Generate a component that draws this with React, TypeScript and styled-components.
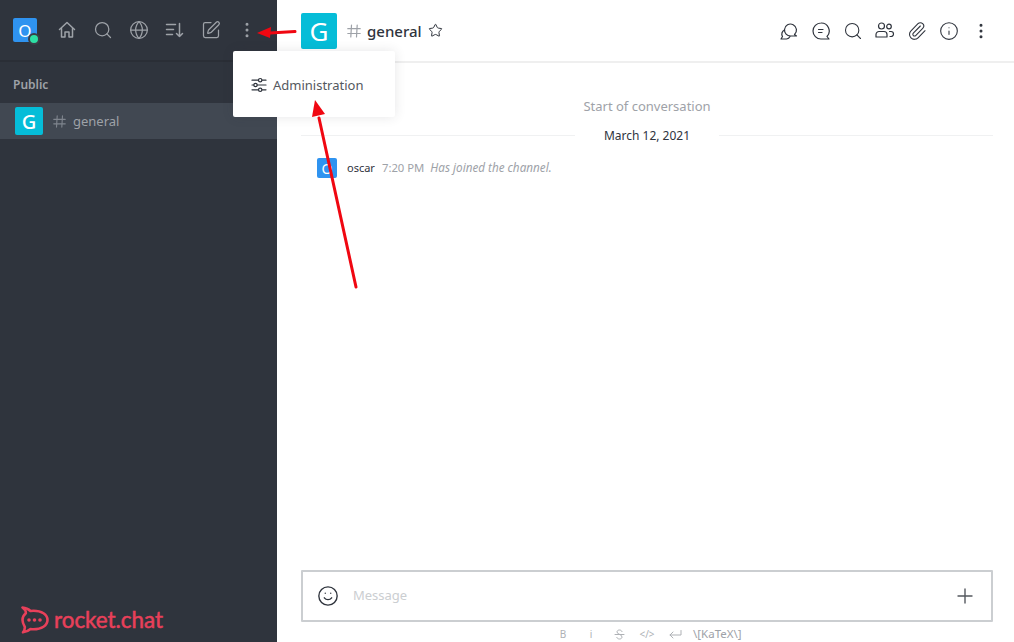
import styled, { createGlobalStyle } from "styled-components";
import { Search, Globe, SquarePen, MoreVertical, Star, Smile, Plus, Paperclip, Info } from "lucide-react";

function HomeIcon() {
  return (
    <svg width="20" height="20" viewBox="0 0 20 20" fill="none" stroke="currentColor" strokeWidth="1.5" strokeLinecap="round" strokeLinejoin="round">
      <path d="M2.500 9.500L10 2.500l7.500 7" />
      <path d="M4.500 8.500v8.500h3.500v-5h4v5h3.500V8.500" />
    </svg>
  );
}

function SortIcon() {
  return (
    <svg width="20" height="20" viewBox="0 0 20 20" fill="none" stroke="currentColor" strokeWidth="1.5" strokeLinecap="round" strokeLinejoin="round">
      <path d="M1.500 4.500h9M1.500 9.500h7M1.500 14.500h6" />
      <path d="M14.500 3.500v13M11.500 13.500l3 3 3-3" />
    </svg>
  );
}

function HashIcon({ size, color }: { size: number; color: string }) {
  return (
    <svg width={size} height={size} viewBox="0 0 14 14" fill="none" stroke={color} strokeWidth="1.200" strokeLinecap="round">
      <path d="M4.500 1L3.800 13M10.200 1l-.7 12M.8 4.700h12.400M.8 9.500h12.400" />
    </svg>
  );
}

function SlidersIcon() {
  return (
    <svg width="16" height="16" viewBox="0 0 16 16" fill="none" stroke="#2f343d" strokeWidth="1.200" strokeLinecap="round">
      <path d="M1 3.200h6.500M11 3.200h4M1 8h1.800M6.300 8H15M1 12.800h6.500M11 12.800h4" />
      <circle cx="9.200" cy="3.200" r="1.700" />
      <circle cx="4.500" cy="8" r="1.700" />
      <circle cx="9.200" cy="12.800" r="1.700" />
    </svg>
  );
}

function ThreadsIcon() {
  return (
    <svg width="20" height="20" viewBox="0 0 20 20" fill="none" stroke="currentColor" strokeWidth="1.200" strokeLinecap="round" strokeLinejoin="round">
      <path d="M5.500 8.500a6 6 0 1 1 10 5l2 1.500h-6a6 6 0 0 1-6-6.500z" />
      <path d="M5.500 9a4.500 4.500 0 0 0-2 6.500L2 18h5.500a4.500 4.500 0 0 0 3.500-2.500" />
    </svg>
  );
}

function DiscussionIcon() {
  return (
    <svg width="20" height="20" viewBox="0 0 20 20" fill="none" stroke="currentColor" strokeWidth="1.200" strokeLinecap="round" strokeLinejoin="round">
      <path d="M10 2a8 8 0 1 0 0 16h8l-2-2.500A8 8 0 0 0 10 2z" />
      <path d="M7.500 8.500h4.500M7.500 11.500h3.500" />
    </svg>
  );
}

function MembersIcon() {
  return (
    <svg width="20" height="20" viewBox="0 0 20 20" fill="none" stroke="currentColor" strokeWidth="1.200" strokeLinecap="round" strokeLinejoin="round">
      <circle cx="6.500" cy="5" r="3" />
      <circle cx="14" cy="5.500" r="2.300" />
      <path d="M1 16v-2.500a3 3 0 0 1 3-3h5a3 3 0 0 1 3 3V16z" />
      <path d="M14.500 10.500h1.500a2.500 2.500 0 0 1 0 5h-1" />
    </svg>
  );
}

function StrikeIcon() {
  return (
    <svg width="11" height="11" viewBox="0 0 11 11" fill="none" stroke="currentColor" strokeWidth="1" strokeLinecap="round">
      <path d="M8 2.500C7.500 1.500 6.500 1 5.500 1 4 1 3 1.800 3 3c0 2.500 5 2 5 5 0 1.200-1 2-2.500 2-1.200 0-2.200-.5-2.700-1.500M1 5.500h9" />
    </svg>
  );
}

function ReturnIcon() {
  return (
    <svg width="13" height="11" viewBox="0 0 13 11" fill="none" stroke="currentColor" strokeWidth="1" strokeLinecap="round" strokeLinejoin="round">
      <path d="M12 1.500v4.500H1M4 3L1 6l3 3" />
    </svg>
  );
}

function RocketLogoIcon() {
  return (
    <svg width="30" height="28" viewBox="0 0 30 28" fill="none">
      <path
        d="M1.500 1.500c3 .2 6 1.500 8 3.500 1-.2 2-.3 3-.3 8 0 14 3.800 14 9.300s-6 9.300-14 9.300c-1 0-2-.1-3-.3-2 1.800-4.500 3-7.500 3.300 1.500-1.800 2-3.500 1.800-5.500C2.800 19 1.500 16.800 1.500 14c0-2.700 1.300-5 3.300-6.700.2-2-.8-4-3.300-5.800z"
        stroke="#e8405a"
        strokeWidth="2.600"
        strokeLinejoin="round"
      />
      <circle cx="8" cy="14" r="1.800" fill="#e8405a" />
      <circle cx="13.500" cy="14" r="1.800" fill="#e8405a" />
      <circle cx="19" cy="14" r="1.800" fill="#e8405a" />
    </svg>
  );
}

export default function App() {
  return (
    <Page>
      <GlobalStyle />
      <Sidebar>
        <SidebarHeader>
          <UserAvatar>
            O
            <StatusDot />
          </UserAvatar>
          <SidebarIcons>
            <SidebarButton><HomeIcon /></SidebarButton>
            <SidebarButton><Search size={20} strokeWidth={1.5} /></SidebarButton>
            <SidebarButton><Globe size={20} strokeWidth={1.5} /></SidebarButton>
            <SidebarButton><SortIcon /></SidebarButton>
            <SidebarButton><SquarePen size={20} strokeWidth={1.5} /></SidebarButton>
            <SidebarButton><MoreVertical size={20} strokeWidth={1.6} /></SidebarButton>
          </SidebarIcons>
        </SidebarHeader>
        <SectionTitle>Public</SectionTitle>
        <RoomRow>
          <RoomAvatar>G</RoomAvatar>
          <HashIcon size={13} color="#7f858e" />
          <RoomName>general</RoomName>
        </RoomRow>
        <LogoRow>
          <RocketLogoIcon />
          <LogoText>rocket.chat</LogoText>
        </LogoRow>
      </Sidebar>

      <Main>
        <MainHeader>
          <HeaderAvatar>G</HeaderAvatar>
          <HashIcon size={14} color="#9ea2a8" />
          <ChannelName>general</ChannelName>
          <Star size={15} strokeWidth={1.6} color="#2f343d" />
          <HeaderTools>
            <ToolButton><ThreadsIcon /></ToolButton>
            <ToolButton><DiscussionIcon /></ToolButton>
            <ToolButton><Search size={20} strokeWidth={1.3} /></ToolButton>
            <ToolButton><MembersIcon /></ToolButton>
            <ToolButton><Paperclip size={20} strokeWidth={1.3} /></ToolButton>
            <ToolButton><Info size={20} strokeWidth={1.3} /></ToolButton>
            <ToolButton><MoreVertical size={20} strokeWidth={1.6} /></ToolButton>
          </HeaderTools>
        </MainHeader>

        <Messages>
          <StartNote>Start of conversation</StartNote>
          <DateDivider>
            <DateLabel>March 12, 2021</DateLabel>
          </DateDivider>
          <MessageRow>
            <MessageAvatar>O</MessageAvatar>
            <Author>oscar</Author>
            <Time>7:20 PM</Time>
            <SystemText>Has joined the channel.</SystemText>
          </MessageRow>
        </Messages>

        <Composer>
          <Smile size={22} strokeWidth={1.5} color="#2f343d" />
          <Placeholder>Message</Placeholder>
          <Plus size={24} strokeWidth={1.4} color="#54585e" />
        </Composer>
        <FormatBar>
          <FormatItem>B</FormatItem>
          <FormatItem>i</FormatItem>
          <FormatItem><StrikeIcon /></FormatItem>
          <FormatItem>&lt;/&gt;</FormatItem>
          <FormatItem><ReturnIcon /></FormatItem>
          <KatexLabel>\[KaTeX\]</KatexLabel>
        </FormatBar>
      </Main>

      <Menu>
        <SlidersIcon />
        <MenuLabel>Administration</MenuLabel>
      </Menu>

      <Annotations width="1014" height="642" viewBox="0 0 1014 642">
        <path d="M295 31.500 L270 33" stroke="#f00711" strokeWidth="3" strokeLinecap="round" />
        <path d="M257 33 L271 27 L270 38 Z" fill="#f00711" />
        <path d="M356 287 L319 118" stroke="#f00711" strokeWidth="3" strokeLinecap="round" />
        <path d="M315 100 L312 117 L325 114 Z" fill="#f00711" />
      </Annotations>
    </Page>
  );
}

const GlobalStyle = createGlobalStyle`
  html, body {
    margin: 0;
    padding: 0;
    background: #fff;
  }
  body {
    font-family: "Noto Sans", "Open Sans", sans-serif;
  }
`;

const Page = styled.div`
  position: relative;
  display: flex;
  width: 1014px;
  height: 642px;
  overflow: hidden;
`;

const Sidebar = styled.aside`
  display: flex;
  flex-direction: column;
  flex: 0 0 277px;
  background: #2f343d;
`;

const SidebarHeader = styled.div`
  display: flex;
  align-items: center;
  flex: 0 0 62px;
  box-sizing: border-box;
  padding: 0 0 0 13px;
  border-bottom: 2px solid #2a2e36;
`;

const UserAvatar = styled.div`
  position: relative;
  display: flex;
  align-items: center;
  justify-content: center;
  width: 24px;
  height: 24px;
  border-radius: 2px;
  background: #2f93f0;
  color: #fff;
  font-size: 17px;
`;

const StatusDot = styled.span`
  position: absolute;
  right: -3px;
  bottom: -3px;
  width: 8px;
  height: 8px;
  border-radius: 50%;
  background: #2de0a5;
  border: 2px solid #3a3f47;
`;

const SidebarIcons = styled.div`
  display: flex;
  margin-left: 12px;
`;

const SidebarButton = styled.div`
  display: flex;
  align-items: center;
  justify-content: center;
  width: 36px;
  height: 36px;
  color: #9ea2a8;
`;

const SectionTitle = styled.div`
  display: flex;
  align-items: center;
  box-sizing: border-box;
  height: 41px;
  padding: 3px 0 0 13px;
  color: #9ea2a8;
  font-size: 12px;
  font-weight: 600;
`;

const RoomRow = styled.div`
  display: flex;
  align-items: center;
  height: 36px;
  padding-left: 15px;
  background: #414852;
`;

const RoomAvatar = styled.div`
  display: flex;
  align-items: center;
  justify-content: center;
  width: 28px;
  height: 28px;
  margin-right: 10px;
  border-radius: 2px;
  background: #05bdd8;
  color: #fff;
  font-size: 20px;
  font-weight: 500;
`;

const RoomName = styled.span`
  margin-left: 7px;
  color: #9ea2a8;
  font-size: 13px;
`;

const LogoRow = styled.div`
  display: flex;
  align-items: center;
  gap: 3px;
  margin-top: auto;
  padding: 0 0 8px 21px;
`;

const LogoText = styled.span`
  color: #e8405a;
  font-family: Lato, sans-serif;
  font-size: 22.400px;
  font-weight: 400;
  line-height: 28px;
  -webkit-text-stroke: 0.5px #e8405a;
`;

const Main = styled.main`
  display: flex;
  flex-direction: column;
  flex: 1;
  min-width: 0;
`;

const MainHeader = styled.header`
  display: flex;
  align-items: center;
  flex: 0 0 63px;
  box-sizing: border-box;
  padding: 0 17px 0 24px;
  border-bottom: 2px solid #efefef;
`;

const HeaderAvatar = styled.div`
  display: flex;
  align-items: center;
  justify-content: center;
  width: 36px;
  height: 36px;
  margin-right: 10px;
  border-radius: 2px;
  background: #05bdd8;
  color: #fff;
  font-size: 26px;
`;

const ChannelName = styled.span`
  margin: 0 6px 0 6px;
  color: #2f343d;
  font-size: 15px;
  font-weight: 500;
`;

const HeaderTools = styled.div`
  display: flex;
  margin-left: auto;
`;

const ToolButton = styled.div`
  display: flex;
  align-items: center;
  justify-content: center;
  width: 32px;
  height: 32px;
  color: #2f343d;
`;

const Messages = styled.section`
  flex: 1;
  padding: 33px 21px 0 24px;
`;

const StartNote = styled.div`
  color: #9ea2a8;
  font-size: 13px;
  line-height: 20px;
  text-align: center;
`;

const DateDivider = styled.div`
  display: flex;
  justify-content: center;
  margin-top: 9px;
  border-bottom: 1px solid #f0f1f2;
  height: 10px;
`;

const DateLabel = styled.span`
  align-self: flex-start;
  margin-top: 1px;
  padding: 0 29px;
  background: #fff;
  color: #2f343d;
  font-size: 12px;
  line-height: 19px;
`;

const MessageRow = styled.div`
  display: flex;
  align-items: center;
  height: 20px;
  margin-top: 22px;
  padding-left: 16px;
  font-size: 12px;
`;

const MessageAvatar = styled.div`
  display: flex;
  align-items: center;
  justify-content: center;
  width: 20px;
  height: 20px;
  margin-right: 10px;
  border-radius: 2px;
  background: #2f93f0;
  color: #fff;
  font-size: 14px;
`;

const Author = styled.span`
  margin: 0 7px 2px 0;
  color: #2f343d;
  font-size: 11px;
`;

const Time = styled.span`
  margin: 0 6px 2px 0;
  color: #9ea2a8;
  font-size: 11.300px;
`;

const SystemText = styled.em`
  margin-bottom: 2px;
  color: #9ea2a8;
  font-size: 11.700px;
`;

const Composer = styled.div`
  display: flex;
  align-items: center;
  flex: 0 0 52px;
  box-sizing: border-box;
  margin: 0 21px 0 24px;
  padding: 0 14px 0 14px;
  border: 2px solid #cbced1;
  border-radius: 1px;
`;

const Placeholder = styled.span`
  flex: 1;
  margin: 0 0 3px 14px;
  color: #cbced1;
  font-size: 13px;
`;

const FormatBar = styled.div`
  display: flex;
  align-items: center;
  flex: 0 0 20px;
  box-sizing: border-box;
  padding: 4px 0 0 272px;
  color: #aeb1b5;
  font-size: 10px;
`;

const FormatItem = styled.span`
  display: flex;
  align-items: center;
  justify-content: center;
  width: 28px;
  height: 16px;
`;

const KatexLabel = styled.span`
  margin-left: 4px;
  color: #9ea2a8;
  font-size: 11.500px;
  line-height: 16px;
`;

const Menu = styled.div`
  position: absolute;
  left: 233px;
  top: 51px;
  display: flex;
  align-items: center;
  box-sizing: border-box;
  width: 162px;
  height: 66px;
  padding: 2px 0 0 18px;
  background: #fff;
  border-radius: 2px;
  box-shadow: 0 0 12px rgba(47, 52, 61, 0.12);
`;

const MenuLabel = styled.span`
  margin-left: 6px;
  color: #54585e;
  font-size: 13px;
`;

const Annotations = styled.svg`
  position: absolute;
  left: 0;
  top: 0;
  z-index: 2;
  pointer-events: none;
`;
